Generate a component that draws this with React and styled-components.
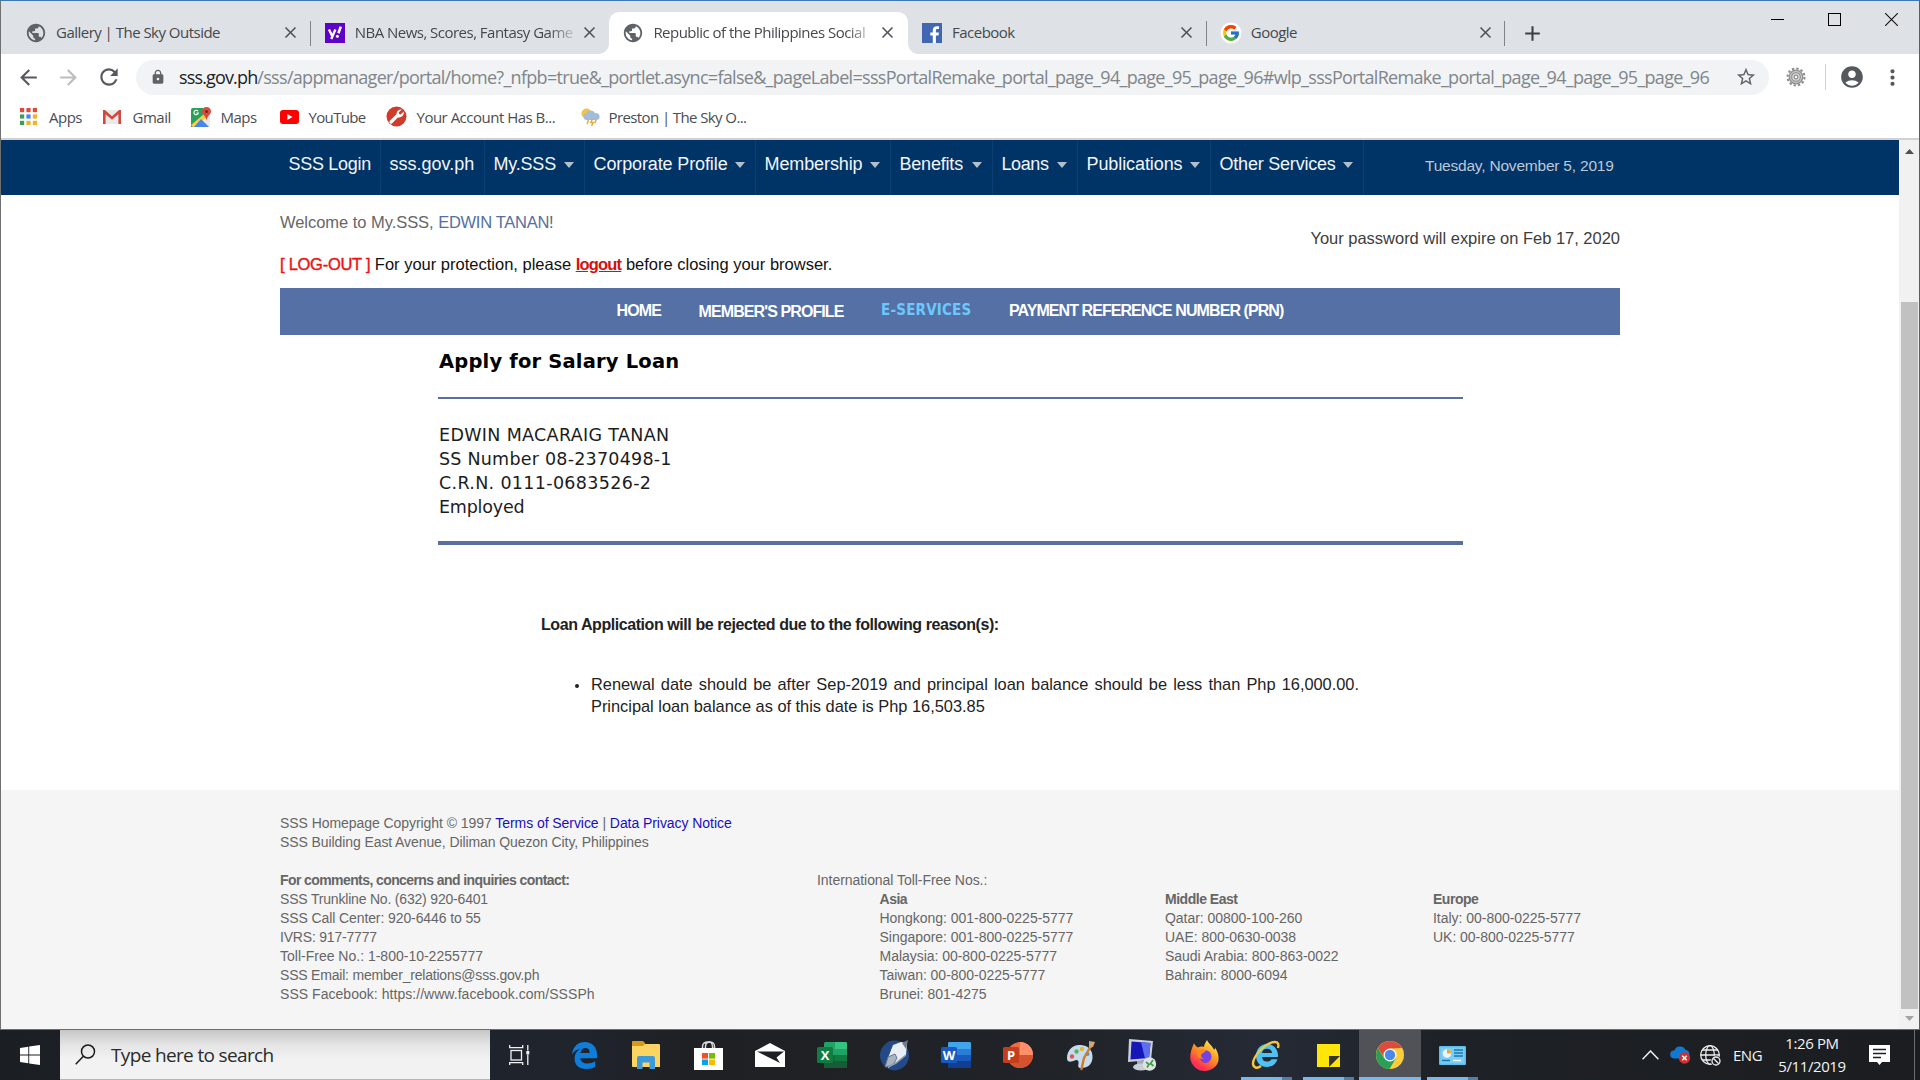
import React from 'react';
import styled, { createGlobalStyle, css } from 'styled-components';
import {
  MdPublic, MdClose, MdAdd, MdArrowBack, MdArrowForward, MdRefresh, MdLock,
  MdStarBorder, MdAccountCircle, MdMoreVert,
} from 'react-icons/md';
import { FcGoogle } from 'react-icons/fc';

const SANS = '"Liberation Sans", Arial, sans-serif';
const WIDE = '"DejaVu Sans", Verdana, sans-serif';
const UI = '"Open Sans", "Segoe UI", sans-serif';

const GlobalStyle = createGlobalStyle`
  * { box-sizing: border-box; }
  body { margin: 0; background: #fff; overflow: hidden; }
  ul, p, h1, h2 { margin: 0; padding: 0; }
  svg { display: block; flex: none; }
`;

const Screen = styled.div`
  width: 1920px;
  height: 1080px;
  display: flex;
  flex-direction: column;
  font-family: ${SANS};
  white-space: nowrap;
`;

const Window = styled.div`
  height: 1030px;
  display: flex;
  flex-direction: column;
  border-top: 1px solid #3c78b4;
  border-left: 1px solid #6f7072;
  border-right: 1px solid #5a5f66;
  border-bottom: 1px solid #6b6d6f;
`;

/* ---------- browser chrome ---------- */

const TabStrip = styled.div`
  height: 53px;
  background: #dee1e6;
  display: flex;
  padding: 11px 0 0 11px;
`;

const Tab = styled.div`
  position: relative;
  width: 298.7px;
  height: 42px;
  display: flex;
  align-items: center;
  padding: 0 10px 1px 13px;
  border-radius: 10px 10px 0 0;
  background: ${(p) => (p.$active ? '#fff' : 'transparent')};
  ${(p) => p.$divider && css`
    &::after {
      content: '';
      position: absolute;
      right: 0;
      top: 9px;
      width: 1px;
      height: 25px;
      background: #80848a;
    }
  `}
  ${(p) => p.$active && css`
    &::before {
      content: '';
      position: absolute;
      left: -10px;
      right: -10px;
      bottom: 0;
      height: 10px;
      background:
        radial-gradient(circle at 0 0, transparent 9.5px, #fff 10px) left / 10px 10px no-repeat,
        radial-gradient(circle at 100% 0, transparent 9.5px, #fff 10px) right / 10px 10px no-repeat;
    }
  `}
`;

const Favicon = styled.span`
  width: 22px;
  height: 22px;
  display: flex;
  align-items: center;
  justify-content: center;
  color: #5f6368;
`;

const TabTitle = styled.span`
  width: 220px;
  margin-left: 9px;
  font: 400 15px/24px ${UI};
  letter-spacing: ${(p) => p.$ls || -0.52}px;
  color: #45484c;
  padding-bottom: 1px;
  ${(p) => p.$fade && css`mask-image: linear-gradient(to right, #000 88%, rgba(0, 0, 0, 0.15));`}
`;

const TabClose = styled.span`
  margin-left: 5px;
  color: #50545a;
`;

const NewTab = styled.div`
  width: 55px;
  height: 42px;
  display: flex;
  align-items: center;
  justify-content: center;
  color: #3c4043;
`;

const WindowButtons = styled.div`
  margin: -11px 21px 0 auto;
  height: 36px;
  display: flex;
  align-items: center;
  gap: 44px;
`;

const Toolbar = styled.div`
  height: 44px;
  display: flex;
  align-items: center;
  background: #fff;
  padding: 2px 0 0 15px;
  color: #5f6368;
`;

const ToolButton = styled.span`
  flex: none;
  width: 24px;
  display: flex;
  justify-content: center;
  margin-right: ${(p) => p.$gap || 0}px;
  color: ${(p) => (p.$dim ? '#babcbe' : '#55595e')};
`;

const Omnibox = styled.div`
  flex: none;
  width: 1633px;
  height: 35px;
  margin-right: 15px;
  border-radius: 18px;
  background: #f1f3f4;
  display: flex;
  align-items: center;
  padding: 0 12px 0 14px;
`;

const Address = styled.span`
  width: 1557px;
  margin-left: 13px;
  padding-bottom: 1px;
  font: 400 18px/28px ${UI};
  letter-spacing: -0.7px;
  color: #80868b;
`;

const Host = styled.span`
  color: #202124;
  letter-spacing: -0.85px;
`;

const ToolDivider = styled.span`
  flex: none;
  width: 1px;
  height: 26px;
  background: #cfd2d5;
  margin: 0 14px 0 17px;
`;

const Bookmarks = styled.div`
  height: 42px;
  display: flex;
  align-items: center;
  padding: 0 0 3px 19px;
  background: #fff;
  border-bottom: 2px solid #cfd1d4;
`;

const Bookmark = styled.div`
  width: ${(p) => p.$w}px;
  display: flex;
  align-items: center;
  gap: ${(p) => p.$gap}px;
  font: 400 15px/22px ${UI};
  letter-spacing: ${(p) => p.$ls || -0.5}px;
  color: #4a4d52;
`;

/* ---------- web page ---------- */

const Viewport = styled.div`
  flex: 1;
  display: flex;
  min-height: 0;
`;

const Page = styled.div`
  width: 1898px;
  display: flex;
  flex-direction: column;
`;

const Scrollbar = styled.div`
  flex: 1;
  background: #f1f1f1;
  display: flex;
  flex-direction: column;
  align-items: center;
  padding: 9px 0 8px;
`;

const Thumb = styled.div`
  width: 17px;
  height: 707px;
  margin: 148px 0 auto;
  background: #c1c1c1;
`;

const TopNav = styled.nav`
  height: 55px;
  background: #003366;
  display: flex;
  padding-left: 280px;
`;

const NavItem = styled.div`
  width: ${(p) => p.$w}px;
  height: 55px;
  padding-left: ${(p) => p.$pad || 8.5}px;
  border-right: 1px solid #0b3f72;
  display: flex;
  font-size: 18px;
  line-height: 48px;
  letter-spacing: ${(p) => p.$ls}px;
  color: #f2f5f9;
`;

const Caret = styled.i`
  margin: 22px 10px 0 auto;
  width: 0;
  height: 0;
  border: 5px solid transparent;
  border-top: 6px solid #b3bfca;
  border-bottom: 0;
`;

const Today = styled.span`
  margin-left: 61px;
  font-size: 15.5px;
  line-height: 51px;
  letter-spacing: -0.21px;
  color: #bcc8d5;
`;

const Greeting = styled.header`
  height: 93px;
  width: 1340px;
  margin-left: 279px;
  display: flex;
  justify-content: space-between;
  padding-top: 10px;
  font-size: 16.5px;
  line-height: 34px;
`;

const GreetingLines = styled.div`
  display: flex;
  flex-direction: column;
  gap: 8px;
  color: #111;
`;

const Welcome = styled.p`
  color: #666;
  letter-spacing: -0.04px;
`;

const UserName = styled.span`
  color: #546fa3;
  letter-spacing: -0.28px;
`;

const LogoutNote = styled.p`
  letter-spacing: 0;
`;

const LogoutTag = styled.span`
  color: #ee1111;
  letter-spacing: -0.27px;
  -webkit-text-stroke: 0.4px #ee1111;
`;

const LogoutLink = styled.a`
  color: #d80f0f;
  font-weight: 700;
  text-decoration: underline;
  letter-spacing: -0.8px;
`;

const Expiry = styled.p`
  margin-top: 16px;
  letter-spacing: -0.02px;
  color: #3d3d3d;
`;

const MemberNav = styled.nav`
  width: 1340px;
  height: 47px;
  margin-left: 279px;
  padding-left: 336.5px;
  background: #5470a5;
  display: flex;
  gap: 37.5px;
`;

const MemberLink = styled.span`
  font: 700 16px/${(p) => p.$lh || 46}px ${SANS};
  letter-spacing: ${(p) => p.$ls}px;
  color: #fff;
`;

const CurrentLink = styled.span`
  font: 700 15px/45px "DejaVu Sans Condensed", "DejaVu Sans", sans-serif;
  font-stretch: condensed;
  letter-spacing: 0.2px;
  color: #6cc8fb;
`;

const Content = styled.main`
  width: 1025px;
  height: 455px;
  margin-left: 437px;
`;

const Title = styled.h1`
  height: 62px;
  padding-left: 1px;
  font: 700 19.5px/53px ${WIDE};
  letter-spacing: 0.18px;
  color: #000;
`;

const MemberInfo = styled.div`
  height: 148px;
  padding: 24px 0 0 1px;
  border-top: 2px solid #5770a0;
  border-bottom: 4px solid #5770a0;
  display: flex;
  flex-direction: column;
`;

const InfoLine = styled.span`
  font: 17.5px/24px ${WIDE};
  letter-spacing: ${(p) => p.$ls}px;
  color: #1c1c1c;
`;

const Rejection = styled.section`
  padding: 68px 0 0 103px;
  color: #222;
`;

const RejectionTitle = styled.h2`
  font-size: 16px;
  line-height: 24px;
  letter-spacing: -0.43px;
`;

const Reasons = styled.ul`
  margin-top: 36px;
  padding-left: 34px;
  list-style: none;
`;

const Reason = styled.li`
  display: flex;
  gap: 12px;
  font-size: 16.4px;
  line-height: 22px;
  letter-spacing: -0.015px;
  &::before {
    content: '';
    width: 4px;
    height: 4px;
    margin-top: 11px;
    border-radius: 50%;
    background: #222;
  }
`;

const ReasonText = styled.div`
  width: 768px;
  display: flex;
  flex-direction: column;
`;

const Justified = styled.span`
  text-align-last: justify;
`;

const Footer = styled.footer`
  flex: 1;
  background: #f5f5f5;
  padding: 24px 0 0 279px;
  font-size: 14px;
  line-height: 19px;
  color: #666;
`;

const FooterLine = styled.p`
  letter-spacing: ${(p) => p.$ls ?? -0.03}px;
`;

const FooterHeading = styled(FooterLine)`
  font-weight: 700;
`;

const FooterLink = styled.a`
  color: #1a0fc0;
`;

const FooterGrid = styled.div`
  margin-top: 19px;
  display: grid;
  grid-template-columns: 537px 1fr;
`;

const Regions = styled.div`
  padding-left: 62.5px;
  display: grid;
  grid-template-columns: 285.5px 268px 200px;
`;

/* ---------- taskbar ---------- */

const Taskbar = styled.div`
  height: 50px;
  display: flex;
  background: linear-gradient(90deg, #1b1e23 0, #20242d 30%, #1f2023 36%, #202328 55%, #252a36 66%, #1e2126 75%, #1b1d20 100%);
`;

const StartButton = styled.div`
  width: 60px;
  display: flex;
  align-items: center;
  justify-content: center;
`;

const SearchBox = styled.div`
  width: 430px;
  height: 50px;
  display: flex;
  align-items: center;
  gap: 15px;
  padding-left: 15px;
  border-bottom: 1px solid #b5b5b5;
  background: linear-gradient(#c6c6c6, #e4e4e4 30%, #f2f2f2 60%);
  font: 400 19px/28px ${UI};
  letter-spacing: -0.65px;
  color: #2b2b2b;
`;

const TaskView = styled.div`
  width: 63px;
  padding-left: 19px;
  display: flex;
  align-items: center;
`;

const TaskButton = styled.div`
  width: 62px;
  height: 50px;
  display: flex;
  align-items: center;
  justify-content: center;
  position: relative;
  background: ${(p) => (p.$active ? '#505257' : 'transparent')};
  ${(p) => p.$open && css`
    &::after {
      content: '';
      position: absolute;
      bottom: 0;
      left: ${p.$active ? 0 : 6}px;
      right: ${p.$active ? 0 : 5}px;
      height: 3px;
      background: ${p.$active ? '#79b8ea' : 'linear-gradient(90deg, #79b8ea 41px, #527fa5 41px)'};
    }
  `}
`;

const Tray = styled.div`
  margin-left: auto;
  display: flex;
  align-items: center;
  font: 400 15px/24px ${UI};
  color: #f3f3f3;
`;

const TrayIcon = styled.span`
  width: ${(p) => p.$w}px;
  padding-right: ${(p) => p.$right || 0}px;
  display: flex;
  justify-content: center;
`;

const Language = styled.span`
  width: 42px;
  padding-left: 8px;
  letter-spacing: -0.5px;
`;

const Clock = styled.div`
  width: 90px;
  display: flex;
  flex-direction: column;
  align-items: center;
  line-height: 23px;
  letter-spacing: -0.4px;
`;

const ShowDesktop = styled.div`
  width: 6px;
  height: 50px;
  border-left: 1px solid #6b6e73;
`;

/* ---------- drawings ---------- */

const YahooIcon = () => (
  <svg width="20" height="20" viewBox="0 0 20 20">
    <rect width="20" height="20" fill="#5f01c9" />
    <path d="M4 6.5l3.2 6.6M10.4 6.5L6.3 16" stroke="#fff" strokeWidth="2.4" fill="none" />
    <path d="M15.8 3.6l-2.4 6.6" stroke="#fff" strokeWidth="2.6" />
    <circle cx="12.4" cy="13.2" r="1.5" fill="#fff" />
  </svg>
);
const FacebookIcon = () => (
  <svg width="20" height="20" viewBox="0 0 20 20">
    <rect width="20" height="20" fill="#4267b2" />
    <path d="M10.8 20v-7.6H8.3V9.5h2.5V7.2c0-2.5 1.6-3.9 3.9-3.9 1.1 0 2.1.1 2.3.1v2.7h-1.6c-1.3 0-1.5.6-1.5 1.5v1.9h3l-.4 2.9h-2.6V20z" fill="#fff" />
  </svg>
);
const GoogleIcon = () => (
  <svg width="22" height="22" viewBox="0 0 22 22">
    <circle cx="11" cy="11" r="10.5" fill="#fff" />
    <g transform="translate(1.5 1.5)"><FcGoogle size={19} /></g>
  </svg>
);
const AppsIcon = () => {
  const colors = ['#dd4b3e', '#dd4b3e', '#dd4b3e', '#3f9c5a', '#4285f4', '#f0b429', '#3f9c5a', '#f0b429', '#f0b429'];
  return (
    <svg width="17" height="17" viewBox="0 0 17 17">
      {colors.map((c, i) => <rect key={i} x={(i % 3) * 6.4} y={Math.floor(i / 3) * 6.4} width="4.2" height="4.2" fill={c} />)}
    </svg>
  );
};
const GmailIcon = () => (
  <svg width="18" height="14" viewBox="0 0 18 14">
    <rect width="18" height="14" rx="1" fill="#e9e9e9" />
    <path d="M1.3 14V1.2L9 8l7.7-6.8V14" fill="none" stroke="#d5473b" strokeWidth="2.6" />
  </svg>
);
const MapsIcon = () => (
  <svg width="20" height="20" viewBox="0 0 20 20">
    <rect y="1" width="19" height="19" rx="2" fill="#e8e8e6" />
    <path d="M0 3a2 2 0 012-2h10l3 6L1.5 20H0z" fill="#2ba05a" />
    <path d="M0 18L13 7l3 3L4 20H2z" fill="#f6cf45" />
    <path d="M10 12l8 8H3z" fill="#4a86ea" />
    <path d="M15.5 0a4.5 4.5 0 014.5 4.6c0 3-3.6 4-4.5 9-.9-5-4.5-6-4.5-9A4.5 4.5 0 0115.5 0z" fill="#dc4a3d" />
    <circle cx="15.5" cy="4.5" r="1.5" fill="#7c241d" />
    <path d="M7 4.3A2.2 2.2 0 107.3 6H5.4" stroke="#fff" fill="none" strokeWidth="1.1" />
  </svg>
);
const YouTubeIcon = () => (
  <svg width="19" height="14" viewBox="0 0 19 14">
    <rect width="19" height="14" rx="3" fill="#f00" />
    <path d="M7.4 4v6l5-3z" fill="#fff" />
  </svg>
);
const WrenchIcon = () => (
  <svg width="21" height="21" viewBox="0 0 21 21">
    <circle cx="10.5" cy="10.5" r="10" fill="#d23a2a" />
    <path d="M5 16l6.5-6.5" stroke="#fff" strokeWidth="3.2" strokeLinecap="round" />
    <path d="M15.8 3.6l-3 3 .4 1.5 1.5.4 3-3a4.6 4.6 0 01-6.4 5.4A4.6 4.6 0 0115.8 3.6z" fill="#fff" />
  </svg>
);
const WeatherIcon = () => (
  <svg width="20" height="20" viewBox="0 0 20 20">
    <circle cx="6.5" cy="6.5" r="5" fill="#f3c04d" />
    <path d="M6 13a3.3 3.3 0 01.4-6.5 4.8 4.8 0 018.8-.3A3.5 3.5 0 0117 13z" fill="#a3bdd8" />
    <path d="M8.5 13l-1.5 4M12.5 12l-1.8 3.4h2.6L11.5 19M16 13l-1 3" stroke="#e5a93c" strokeWidth="1.5" fill="none" />
  </svg>
);
const GearIcon = () => (
  <svg width="20" height="20" viewBox="0 0 20 20">
    <circle cx="10" cy="10" r="8.5" fill="none" stroke="#8b8b8b" strokeWidth="2" strokeDasharray="2.4 2.05" />
    <circle cx="10" cy="10" r="5.6" fill="#d9d9d9" stroke="#8f8f8f" strokeWidth="3.6" />
    <circle cx="10" cy="10" r="5.5" fill="none" stroke="#c4c4c4" strokeWidth="1.3" />
    <circle cx="10" cy="10" r="2" fill="#f5f5f5" stroke="#777" strokeWidth="1" />
  </svg>
);
const WindowsLogo = () => (
  <svg width="20" height="20" viewBox="0 0 20 20" fill="#fff">
    <path d="M0 2.9L8.3 1.7v7.8H0zM9.2 1.6L20 0v9.5H9.2zM0 10.4h8.3v7.9L0 17.1zM9.2 10.4H20V20L9.2 18.4z" />
  </svg>
);
const SearchGlyph = () => (
  <svg width="21" height="21" viewBox="0 0 21 21" fill="none" stroke="#1b1b1b" strokeWidth="1.5">
    <circle cx="13" cy="7.5" r="6.5" /><path d="M8.4 12.3L.7 20.2" />
  </svg>
);
const TaskViewGlyph = () => (
  <svg width="21" height="20" viewBox="0 0 21 20" fill="none" stroke="#f2f2f2" strokeWidth="1.3">
    <rect x="2" y="5.5" width="10.5" height="9.5" />
    <path d="M.7 0v2.7h13V0M.7 20v-2.3h13V20M18.8 0v5.5M18.8 9.5V20" />
    <rect x="17.3" y="6" width="3" height="3.4" fill="#f2f2f2" stroke="none" />
  </svg>
);
const EdgeIcon = () => (
  <svg width="25" height="27" viewBox="0 0 25 27">
    <path d="M0 12.3C1 4.500 6 0 12.800 0 20 0 25 5 25 12.600v3.600H8.300c.3 3.600 3.200 5.300 7.200 5.300 2.900 0 5.400-.8 7.700-2.200v5.500c-2.300 1.400-5.400 2.200-9 2.200-7 0-11.600-4-11.600-10.300 0-4.400 2.300-8 6-9.900C5 7.400 2 9.100 0 12.300zM8.500 11h9.200c0-3-1.400-4.900-4.300-4.900C10.700 6.100 9 8 8.500 11z" fill="#0f7edb" />
  </svg>
);
const ExplorerIcon = () => (
  <svg width="28" height="28" viewBox="0 0 28 28">
    <path d="M0 1a1 1 0 011-1h10l2 2v4H0z" fill="#d79a16" />
    <path d="M0 5h11l2-2h14a1 1 0 011 1v22H1a1 1 0 01-1-1z" fill="#fbd462" />
    <path d="M5 28V17a2 2 0 012-2h14a2 2 0 012 2v11h-5.500v-6.500h-7V28z" fill="#3d9adb" />
  </svg>
);
const StoreIcon = () => (
  <svg width="29" height="29" viewBox="0 0 29 29">
    <path d="M8.500 8V5.500C8.500 2.500 11 1 13.500 1M20.500 8V5.500c0-6-9-6-9 0V8M11 2.500c6-4 8 0 7.500 5.500" fill="none" stroke="#d9d9d9" strokeWidth="1.5" />
    <rect y="7" width="29" height="22" fill="#fff" />
    <rect x="8" y="12" width="6" height="5.600" fill="#f25022" /><rect x="15" y="12" width="6" height="5.600" fill="#7fba00" />
    <rect x="8" y="18.500" width="6" height="5.600" fill="#00a4ef" /><rect x="15" y="18.500" width="6" height="5.600" fill="#ffb900" />
  </svg>
);
const MailIcon = () => (
  <svg width="30" height="24" viewBox="0 0 30 24">
    <path d="M0 8L15 0l15 8v16H0z" fill="#fff" />
    <path d="M2 8.500h27l-7.500 6L25 20 11.500 13.300z" fill="#1e2024" />
  </svg>
);
const OfficeLabel = styled.text`
  font: 700 13px "Open Sans", sans-serif;
  fill: #fff;
  text-anchor: middle;
`;
const ExcelIcon = () => (
  <svg width="30" height="26" viewBox="0 0 30 26">
    <rect x="7" width="23" height="26" rx="1.5" fill="#21a366" />
    <path d="M18 0h10.500A1.500 1.500 0 0130 1.500V7H18z" fill="#33c481" /><path d="M18 13h12v6H18z" fill="#107c41" />
    <path d="M7 13h11v6H7z" fill="#0f6f3b" /><path d="M7 19h23v5.500a1.500 1.500 0 01-1.500 1.500h-20A1.500 1.500 0 017 24.500z" fill="#185c37" />
    <rect y="5" width="16" height="16" rx="1.5" fill="#107c41" /><OfficeLabel x="8" y="17.7">X</OfficeLabel>
  </svg>
);
const JournalIcon = () => (
  <svg width="29" height="31" viewBox="0 0 29 31">
    <ellipse cx="14.500" cy="15.500" rx="14.500" ry="15" fill="#234a86" />
    <path d="M8 18L13 5l8-3 6 1-1 12-10 8-8 5z" fill="#e9eef4" />
    <path d="M28 0l-6 3 4 6z" fill="#727b86" />
    <path d="M5 27l3-10 7-3 2 4-4 7z" fill="#a9b4c3" stroke="#69778b" />
    <path d="M26 15l-10 8-8 4" fill="none" stroke="#8c9aae" strokeWidth="1.5" />
  </svg>
);
const WordIcon = () => (
  <svg width="30" height="26" viewBox="0 0 30 26">
    <rect x="7" width="23" height="26" rx="1.5" fill="#2b7cd3" /><path d="M8.500 0h20A1.500 1.500 0 0130 1.500V7H7V1.500A1.500 1.500 0 018.500 0z" fill="#41a5ee" />
    <path d="M7 13h23v6H7z" fill="#185abd" /><path d="M7 19h23v5.500a1.500 1.500 0 01-1.500 1.500h-20A1.500 1.500 0 017 24.500z" fill="#103f91" />
    <rect y="5" width="16" height="16" rx="1.5" fill="#185abd" /><OfficeLabel x="8" y="17.7">W</OfficeLabel>
  </svg>
);
const PowerPointIcon = () => (
  <svg width="30" height="26" viewBox="0 0 30 26">
    <circle cx="17" cy="13" r="13" fill="#ed6c47" /><path d="M17 0a13 13 0 0113 13H17z" fill="#ff8f6b" />
    <path d="M4 13h26a13 13 0 01-26 0z" fill="#d35230" />
    <rect y="5" width="16" height="16" rx="1.5" fill="#c43e1c" /><OfficeLabel x="8" y="17.7">P</OfficeLabel>
  </svg>
);
const PaintIcon = () => (
  <svg width="29" height="31" viewBox="0 0 29 31">
    <path d="M1 18C1 10 7 4 15 5c8 .5 12 6 11.500 13S21 28 15 28c-3 0-3-2-2.500-4.500s-1-4.500-4-3S1 23 1 18z" fill="#c5dcef" />
    <circle cx="6" cy="16.500" r="2.200" fill="#e2574c" /><circle cx="10.500" cy="11.500" r="2.200" fill="#57b457" />
    <circle cx="16" cy="9" r="2.200" fill="#e8b536" /><circle cx="21.500" cy="14" r="2" fill="#4a90d9" />
    <path d="M25 6l-7 12-2.500 11" fill="none" stroke="#cf7b2b" strokeWidth="2.4" strokeLinecap="round" /><path d="M23 1l6 1-2 5-4 1z" fill="#cfa678" />
  </svg>
);
const RemoteIcon = () => (
  <svg width="29" height="32" viewBox="0 0 29 32">
    <path d="M1 0l24 2-2 19L0 23z" fill="#c9d0da" /><path d="M3.500 2.500l19 1.500-1.500 15L2.500 20.500z" fill="#1717b8" />
    <path d="M13 3.200L22.500 4 21 19l-4 .4z" fill="#5c6ff0" />
    <path d="M9 22h8v4H9z" fill="#9fa8b4" /><ellipse cx="13" cy="28" rx="8" ry="3.500" fill="#c9cfd6" />
    <circle cx="21.500" cy="25" r="6.700" fill="#dfe4e2" /><path d="M18 23l3 2.500-2 3M25 21l-2.500 3.500 3 2.500" fill="none" stroke="#3f9e4c" strokeWidth="1.7" />
  </svg>
);
const FirefoxIcon = () => (
  <svg width="29" height="31" viewBox="0 0 29 29" preserveAspectRatio="none">
    <defs><linearGradient id="ff" x1="0.8" y1="0" x2="0.2" y2="1"><stop offset="0" stopColor="#fff04f" /><stop offset=".45" stopColor="#ff9122" /><stop offset=".85" stopColor="#ff2c55" /></linearGradient></defs>
    <path d="M4 3c1 2 2 3 4 4 2-1 4-1 6-.5C14 4 16 2 17 0c2 4 5 5 7 9 1 0 1-1 1-2 3 4 4 8 3.500 12C27.500 25 21 29 14.500 29S1 24 .3 17C0 12 2 7 4 3z" fill="url(#ff)" />
    <circle cx="15.5" cy="15.5" r="6" fill="#7542e5" /><path d="M7 10c3-2 7-2 9 0-2 2-4 2-5 4 0 2 1 3 3 4-5 0-8-4-7-8z" fill="#ff8a1f" />
  </svg>
);
const IeIcon = () => (
  <svg width="30" height="30" viewBox="0 0 30 30">
    <path d="M27 17H11c.3 3 2 4.500 5 4.500 2 0 3.500-.7 4.500-2.300h6C25 24 21 27 16 27 9.500 27 5 22.500 5 16S9.500 4 16 4s11.500 5 11 13zM11 13h10c-.4-2.800-2.200-4.200-5-4.200s-4.500 1.400-5 4.200z" fill="#4cc3f3" />
    <path d="M27 8c1-4 0-6-3-6C15 2 3 15 2 23c0 5 4 6 8 3" fill="none" stroke="#f4c63a" strokeWidth="2.4" />
  </svg>
);
const StickyIcon = () => (
  <svg width="23" height="23" viewBox="0 0 23 23">
    <path d="M0 0h23v12H12v11H0z" fill="#ffe60a" /><path d="M12 12h11L12 23z" fill="#35342c" /><path d="M23 12v11H12z" fill="#ffe60a" />
  </svg>
);
const ChromeIcon = () => (
  <svg width="28" height="28" viewBox="0 0 28 28">
    <circle cx="14" cy="14" r="14" fill="#fbcd3c" />
    <path d="M1.900 7A14 14 0 0126.100 7L14 7.500 8.500 17z" fill="#de4b3d" />
    <path d="M1.900 7A14 14 0 0013.500 28l6.500-11L14 20 8 17z" fill="#2a9f57" />
    <circle cx="14" cy="14" r="6.5" fill="#fff" /><circle cx="14" cy="14" r="5.2" fill="#4a87ee" />
  </svg>
);
const ControlIcon = () => (
  <svg width="27" height="19" viewBox="0 0 27 19">
    <rect width="27" height="19" rx="1" fill="#5bbdec" /><rect x="1.5" y="1.5" width="24" height="16" fill="#7ccdf3" />
    <circle cx="8" cy="7.5" r="4.3" fill="#e8f6fd" /><path d="M8 7.500V3.200a4.300 4.300 0 014.300 4.300z" fill="#f5a623" />
    <path d="M15 4h9M15 7h9M15 10h9M3 14.500h8" stroke="#1b75b5" strokeWidth="1.4" /><path d="M14 14.500h8" stroke="#fff" strokeWidth="1.4" />
  </svg>
);
const ChevronUp = () => (
  <svg width="17" height="10" viewBox="0 0 17 10" fill="none" stroke="#eee" strokeWidth="1.5"><path d="M.6 9.300L8.500 1l7.900 8.300" /></svg>
);
const OneDriveIcon = () => (
  <svg width="21" height="18" viewBox="0 0 21 18">
    <path d="M4 12.500a4 4 0 01.4-8A6 6 0 0115.500 4 4.300 4.300 0 0116 12.500z" fill="#1279d3" />
    <circle cx="14.5" cy="12" r="5.7" fill="#d32f2f" /><path d="M12.300 9.800l4.400 4.400M16.700 9.800l-4.400 4.400" stroke="#fff" strokeWidth="1.6" />
  </svg>
);
const NetworkIcon = () => (
  <svg width="21" height="21" viewBox="0 0 21 21" fill="none" stroke="#eee" strokeWidth="1.3">
    <circle cx="10" cy="10" r="9.3" /><ellipse cx="10" cy="10" rx="4.3" ry="9.3" /><path d="M.7 10h18.600M2.200 5h15.600M2.200 15H11" />
    <circle cx="16" cy="16" r="5.4" fill="#1d1f22" stroke="none" /><circle cx="16" cy="16" r="4" /><path d="M13.300 13.300l5.400 5.400" />
  </svg>
);
const NoticeIcon = () => (
  <svg width="21" height="20" viewBox="0 0 21 20">
    <path d="M0 0h21v17h-8l-2.500 3L8 17H0z" fill="#fff" /><path d="M4 4.500h13M4 8.500h13M4 12.500h8" stroke="#1d1f22" strokeWidth="1.4" />
  </svg>
);
const MinimizeGlyph = () => <svg width="13" height="13" viewBox="0 0 13 13"><path d="M0 6.500h13" stroke="#000" /></svg>;
const MaximizeGlyph = () => <svg width="13" height="13" viewBox="0 0 13 13"><rect x=".5" y=".5" width="12" height="12" fill="none" stroke="#000" /></svg>;
const CloseGlyph = () => <svg width="13" height="13" viewBox="0 0 13 13"><path d="M0 0l13 13M13 0L0 13" stroke="#111" strokeWidth="1.1" /></svg>;
const ScrollArrow = ({ down }) => (
  <svg width="9" height="5" viewBox="0 0 9 5"><path d={down ? 'M0 0h9L4.500 5z' : 'M0 5h9L4.500 0z'} fill={down ? '#a3a3a3' : '#505050'} /></svg>
);

/* ---------- data ---------- */

const tabs = [
  { title: 'Gallery | The Sky Outside', icon: <MdPublic size={22} />, divider: true },
  { title: 'NBA News, Scores, Fantasy Game', icon: <YahooIcon />, fade: true },
  { title: 'Republic of the Philippines Social', icon: <MdPublic size={22} />, fade: true, active: true },
  { title: 'Facebook', icon: <FacebookIcon />, divider: true },
  { title: 'Google', icon: <GoogleIcon />, divider: true },
];

const bookmarks = [
  { label: 'Apps', icon: <AppsIcon />, w: 82.5, gap: 12 },
  { label: 'Gmail', icon: <GmailIcon />, w: 88, gap: 12 },
  { label: 'Maps', icon: <MapsIcon />, w: 89, gap: 10 },
  { label: 'YouTube', icon: <YouTubeIcon />, w: 106, gap: 10, ls: -0.65 },
  { label: 'Your Account Has B...', icon: <WrenchIcon />, w: 194, gap: 10 },
  { label: 'Preston | The Sky O...', icon: <WeatherIcon />, w: 200, gap: 9, ls: -0.6 },
];

const navItems = [
  ['SSS Login', 100, -0.29, false, 7.5], ['sss.gov.ph', 104, 0], ['My.SSS', 100, -0.2, true],
  ['Corporate Profile', 171, -0.12, true], ['Membership', 135, -0.1, true], ['Benefits', 102, -0.2, true],
  ['Loans', 85, -0.4, true], ['Publications', 133, -0.09, true], ['Other Services', 153, -0.21, true],
];

const contacts = [
  ['SSS Trunkline No. (632) 920-6401', -0.19], ['SSS Call Center: 920-6446 to 55', -0.1], ['IVRS: 917-7777', -0.2],
  ['Toll-Free No.: 1-800-10-2255777', 0], ['SSS Email: member_relations@sss.gov.ph', -0.2],
  ['SSS Facebook: https://www.facebook.com/SSSPh', 0.04],
];

const regions = [
  ['Asia', ['Hongkong: 001-800-0225-5777', 'Singapore: 001-800-0225-5777', 'Malaysia: 00-800-0225-5777', 'Taiwan: 00-800-0225-5777', 'Brunei: 801-4275']],
  ['Middle East', ['Qatar: 00800-100-260', 'UAE: 800-0630-0038', 'Saudi Arabia: 800-863-0022', 'Bahrain: 8000-6094']],
  ['Europe', ['Italy: 00-800-0225-5777', 'UK: 00-800-0225-5777']],
];

const taskApps = [
  [EdgeIcon], [ExplorerIcon], [StoreIcon], [MailIcon], [ExcelIcon], [JournalIcon], [WordIcon], [PowerPointIcon],
  [PaintIcon], [RemoteIcon], [FirefoxIcon], [IeIcon, true], [StickyIcon, true], [ChromeIcon, true, true], [ControlIcon, true],
];

export default function App() {
  return (
    <Screen>
      <GlobalStyle />
      <Window>
        <TabStrip>
          {tabs.map((t) => (
            <Tab key={t.title} $active={t.active} $divider={t.divider}>
              <Favicon>{t.icon}</Favicon>
              <TabTitle $fade={t.fade}>{t.title}</TabTitle>
              <TabClose><MdClose size={19} /></TabClose>
            </Tab>
          ))}
          <NewTab><MdAdd size={25} /></NewTab>
          <WindowButtons><MinimizeGlyph /><MaximizeGlyph /><CloseGlyph /></WindowButtons>
        </TabStrip>
        <Toolbar>
          <ToolButton $gap={16}><MdArrowBack size={25} /></ToolButton>
          <ToolButton $gap={17} $dim><MdArrowForward size={25} /></ToolButton>
          <ToolButton $gap={15}><MdRefresh size={26} /></ToolButton>
          <Omnibox>
            <MdLock size={16} />
            <Address>
              <Host>sss.gov.ph</Host>/sss/appmanager/portal/home?_nfpb=true&amp;_portlet.async=false&amp;_pageLabel=sssPortalRemake_portal_page_94_page_95_page_96#wlp_sssPortalRemake_portal_page_94_page_95_page_96
            </Address>
            <MdStarBorder size={22} />
          </Omnibox>
          <ToolButton><GearIcon /></ToolButton>
          <ToolDivider />
          <ToolButton $gap={16}><MdAccountCircle size={26} /></ToolButton>
          <ToolButton><MdMoreVert size={25} /></ToolButton>
        </Toolbar>
        <Bookmarks>
          {bookmarks.map((b) => (
            <Bookmark key={b.label} $w={b.w} $gap={b.gap} $ls={b.ls}>{b.icon}<span>{b.label}</span></Bookmark>
          ))}
        </Bookmarks>
        <Viewport>
          <Page>
            <TopNav>
              {navItems.map(([label, w, ls, menu, pad]) => (
                <NavItem key={label} $w={w} $ls={ls} $pad={pad}>{label}{menu && <Caret />}</NavItem>
              ))}
              <Today>Tuesday, November 5, 2019</Today>
            </TopNav>
            <Greeting>
              <GreetingLines>
                <Welcome>Welcome to My.SSS, <UserName>EDWIN TANAN</UserName>!</Welcome>
                <LogoutNote>
                  <LogoutTag>[ LOG-OUT ]</LogoutTag> For your protection, please <LogoutLink>logout</LogoutLink> before closing your browser.
                </LogoutNote>
              </GreetingLines>
              <Expiry>Your password will expire on Feb 17, 2020</Expiry>
            </Greeting>
            <MemberNav>
              <MemberLink $ls={-0.87}>HOME</MemberLink>
              <MemberLink $ls={-0.9} $lh={47}>MEMBER'S PROFILE</MemberLink>
              <CurrentLink>E-SERVICES</CurrentLink>
              <MemberLink $ls={-0.93}>PAYMENT REFERENCE NUMBER (PRN)</MemberLink>
            </MemberNav>
            <Content>
              <Title>Apply for Salary Loan</Title>
              <MemberInfo>
                <InfoLine $ls={0.33}>EDWIN MACARAIG TANAN</InfoLine>
                <InfoLine $ls={0.23}>SS Number 08-2370498-1</InfoLine>
                <InfoLine $ls={0.33}>C.R.N. 0111-0683526-2</InfoLine>
                <InfoLine $ls={-0.2}>Employed</InfoLine>
              </MemberInfo>
              <Rejection>
                <RejectionTitle>Loan Application will be rejected due to the following reason(s):</RejectionTitle>
                <Reasons>
                  <Reason>
                    <ReasonText>
                      <Justified>Renewal date should be after Sep-2019 and principal loan balance should be less than Php 16,000.00.</Justified>
                      <span>Principal loan balance as of this date is Php 16,503.85</span>
                    </ReasonText>
                  </Reason>
                </Reasons>
              </Rejection>
            </Content>
            <Footer>
              <FooterLine $ls={-0.06}>
                SSS Homepage Copyright © 1997 <FooterLink>Terms of Service</FooterLink> | <FooterLink>Data Privacy Notice</FooterLink>
              </FooterLine>
              <FooterLine $ls={-0.09}>SSS Building East Avenue, Diliman Quezon City, Philippines</FooterLine>
              <FooterGrid>
                <div>
                  <FooterHeading $ls={-0.59}>For comments, concerns and inquiries contact:</FooterHeading>
                  {contacts.map(([text, ls]) => <FooterLine key={text} $ls={ls}>{text}</FooterLine>)}
                </div>
                <div>
                  <FooterLine $ls={-0.05}>International Toll-Free Nos.:</FooterLine>
                  <Regions>
                    {regions.map(([name, lines]) => (
                      <div key={name}>
                        <FooterHeading $ls={-0.48}>{name}</FooterHeading>
                        {lines.map((l) => <FooterLine key={l}>{l}</FooterLine>)}
                      </div>
                    ))}
                  </Regions>
                </div>
              </FooterGrid>
            </Footer>
          </Page>
          <Scrollbar><ScrollArrow /><Thumb /><ScrollArrow down /></Scrollbar>
        </Viewport>
      </Window>
      <Taskbar>
        <StartButton><WindowsLogo /></StartButton>
        <SearchBox><SearchGlyph /><span>Type here to search</span></SearchBox>
        <TaskView><TaskViewGlyph /></TaskView>
        {taskApps.map(([Icon, open, active], i) => (
          <TaskButton key={i} $open={open} $active={active}><Icon /></TaskButton>
        ))}
        <Tray>
          <TrayIcon $w={30}><ChevronUp /></TrayIcon>
          <TrayIcon $w={30}><OneDriveIcon /></TrayIcon>
          <TrayIcon $w={30}><NetworkIcon /></TrayIcon>
          <Language>ENG</Language>
          <Clock><span>1:26 PM</span><span>5/11/2019</span></Clock>
          <TrayIcon $w={57} $right={13}><NoticeIcon /></TrayIcon>
          <ShowDesktop />
        </Tray>
      </Taskbar>
    </Screen>
  );
}
